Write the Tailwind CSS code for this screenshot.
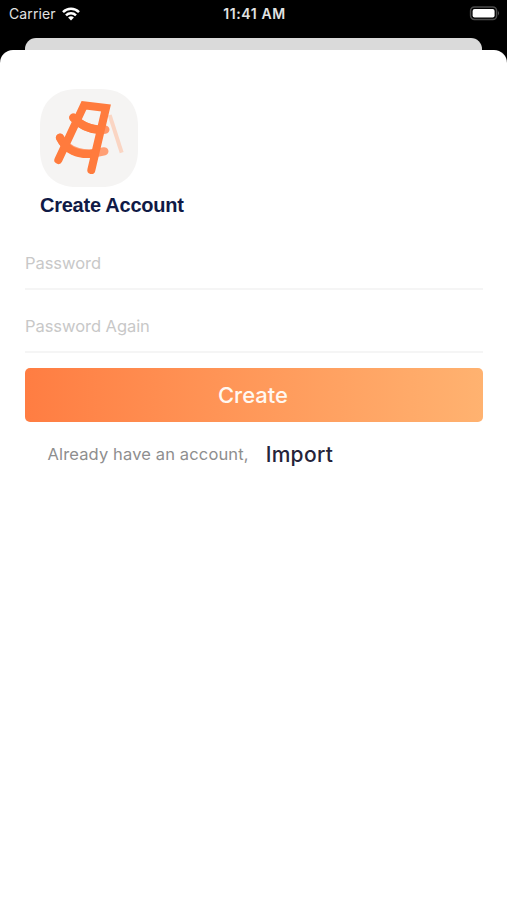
<!DOCTYPE html>
<html lang="en">
<head>
<meta charset="utf-8">
<title>Create Account</title>
<script src="https://cdn.jsdelivr.net/npm/@tailwindcss/browser@4"></script>
</head>
<body class="bg-black font-['Inter','Liberation_Sans',sans-serif]">
<div class="flex h-[900px] w-[507px] flex-col overflow-hidden bg-black">
  <header class="grid h-[38px] shrink-0 grid-cols-3 items-start pt-[5px] pr-[7px] pl-[9px] text-[#e2e2e2]">
    <div class="flex items-center gap-[6px]">
      <span class="text-[14px] leading-[18px] tracking-[0.1px]">Carrier</span>
      <svg class="h-[14px] w-[18px]" viewBox="0 0 18 14" fill="none" stroke="#fff" stroke-width="2.5">
        <path d="M1 5.2C5.500.7 12.500.7 17 5.200"/>
        <path d="M4 8.300C6.800 5.500 11.200 5.500 14 8.300"/>
        <path d="M6.100 10.500Q9 8.100 11.900 10.500L9 13.500Z" fill="#fff" stroke="none"/>
      </svg>
    </div>
    <span class="text-center text-[14px] leading-[18px] font-semibold tracking-[0.6px] whitespace-nowrap">11:41 AM</span>
    <svg class="mt-px h-[15px] w-[31px] justify-self-end" viewBox="0 0 31 15">
      <rect x="1.600" y="1" width="26" height="12.500" rx="3.800" fill="#000" stroke="#4b4b4b" stroke-width="1.500"/>
      <rect x="3.600" y="3" width="22" height="8.500" rx="2" fill="#fff"/>
      <path d="M29 5q2 2.200 0 4.500z" fill="#555"/>
    </svg>
  </header>
  <div class="mx-[25px] h-3 shrink-0 rounded-t-[11px] bg-[#dadada]"></div>
  <main class="flex-1 rounded-t-[13px] bg-white px-[25px] pt-[39px]">
    <svg class="ml-[15px] block h-[98px] w-[98px]" viewBox="30 27 294 294" fill="none" stroke-linecap="round">
      <path d="M142 27H212C282 27 324 69 324 139V209C324 279 282 321 212 321H142C72 321 30 279 30 209V139C30 69 72 27 142 27Z" fill="#f5f4f3"/>
      <path d="M239 105L275 218" stroke="#fad5c3" stroke-width="12" stroke-linecap="butt"/>
      <path d="M130 113Q170 154 226 149" stroke="#ff9668" stroke-width="25"/>
      <path d="M90 173C113 218 167 230 223 214" stroke="#ff9f75" stroke-width="25"/>
      <path d="M130 113Q161 146 205 149M90 173C108 211 145 225 187 221" stroke="#ff7b3d" stroke-width="25"/>
      <path d="M85 240L162 76L228 84L184 270" stroke="#ff7b3d" stroke-width="24" stroke-linejoin="miter"/>
    </svg>
    <h1 class="mt-1 ml-[15px] font-['Liberation_Sans',sans-serif] text-[20px] leading-7 font-bold tracking-[-0.25px] text-[#101a46]">Create Account</h1>
    <div class="mt-4 flex h-[55px] w-[458px] items-center border-b-2 border-[#f5f5f5] pt-[3px] text-[16.500px] tracking-[-0.05px] text-[#c8c8c8]">Password</div>
    <div class="mt-2 flex h-[55px] w-[458px] items-center border-b-2 border-[#f5f5f5] pt-[3px] text-[16.500px] tracking-[-0.05px] text-[#c8c8c8]">Password Again</div>
    <button class="mt-[15px] block h-[54px] w-[458px] rounded-[5px] bg-linear-to-r from-[#ff7d42] to-[#ffb270] pr-[2px] text-[22px] font-medium text-[#fff8f1]">Create</button>
    <div class="mt-[15px] flex h-[34px] items-center gap-[17px] pl-[22.500px]">
      <span class="text-[16.500px] tracking-[0.14px] text-[#8e8e8e]">Already have an account,</span>
      <a class="pt-px text-[21px] font-medium tracking-[0.3px] text-[#25243a]">Import</a>
    </div>
  </main>
</div>
</body>
</html>
